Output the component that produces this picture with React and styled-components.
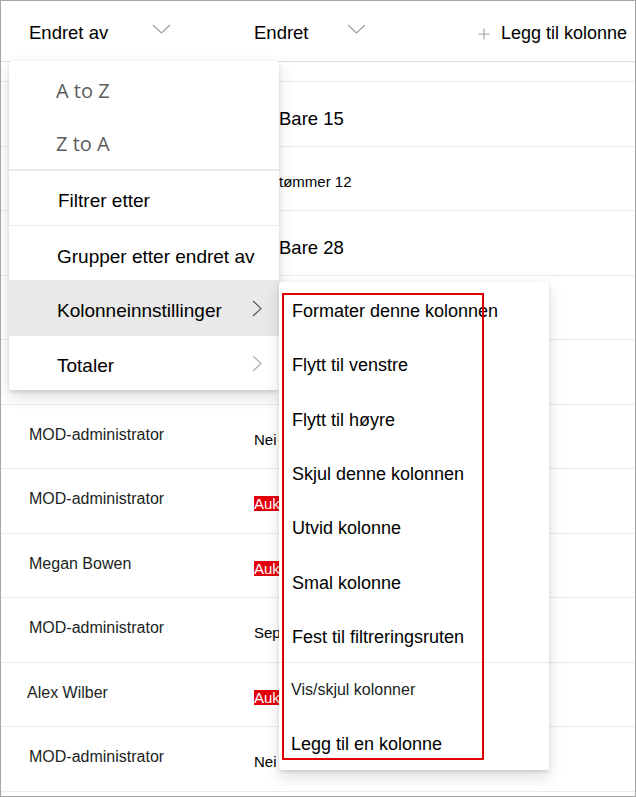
import React from 'react'
import styled, { createGlobalStyle } from 'styled-components'

const GlobalStyle = createGlobalStyle`
  html, body {
    margin: 0;
    padding: 0;
    background: #fff;
  }
  body {
    font-family: "Liberation Sans", Arial, sans-serif;
    color: #000;
  }
`

const Frame = styled.div`
  position: relative;
  width: 636px;
  height: 797px;
  box-sizing: border-box;
  border: 1px solid #a6a6a6;
  overflow: hidden;
  background: #fff;
`

const HeaderRow = styled.div`
  display: flex;
  height: 60px;
  border-bottom: 1px solid #e1dfdd;
`

const HeaderCell = styled.div`
  display: flex;
  align-items: flex-start;
  box-sizing: border-box;
  width: ${p => (p.$w ? `${p.$w}px` : 'auto')};
  flex: ${p => (p.$w ? 'none' : '1')};
  padding-left: ${p => p.$pl || 0}px;
  padding-top: 21px;
`

const HeaderLabel = styled.div`
  width: ${p => (p.$w ? `${p.$w}px` : 'auto')};
  font-size: ${p => p.$size || 18}px;
  line-height: 22px;
  color: #000;
  white-space: nowrap;
`

const ChevronDown = styled.svg`
  margin-top: 2px;
  flex: none;
`

const PlusIcon = styled.svg`
  margin-top: 6px;
  margin-right: 11px;
  flex: none;
`

const Row = styled.div`
  display: flex;
  height: ${p => p.$h || 64.5}px;
  box-sizing: border-box;
  border-bottom: 1px solid #edebe9;
`

const NameCell = styled.div`
  width: 253px;
  flex: none;
  box-sizing: border-box;
  padding-left: ${p => p.$pl ?? 28}px;
  padding-top: 20px;
  font-size: 16px;
  line-height: 20px;
  color: #201f1e;
  white-space: nowrap;
`

const ValueCell = styled.div`
  flex: 1;
  box-sizing: border-box;
  padding-left: ${p => p.$indent || 0}px;
  padding-top: ${p => p.$pt || 25}px;
  font-size: ${p => p.$size || 15}px;
  line-height: 20px;
  color: #000;
  white-space: nowrap;
  overflow: hidden;
`

const RedTag = styled.span`
  display: inline-block;
  background: #e3000b;
  color: #fff;
  line-height: 15px;
  padding: 0 1px 0 0;
`

const Menu = styled.div`
  position: absolute;
  left: ${p => p.$x}px;
  top: ${p => p.$y}px;
  width: 270px;
  background: #fff;
  border-radius: 2px;
  box-shadow: 0 6.4px 14.4px rgba(0, 0, 0, 0.13), 0 1.2px 3.6px rgba(0, 0, 0, 0.11);
  display: flex;
  flex-direction: column;
`

const MenuItem = styled.div`
  display: flex;
  align-items: center;
  justify-content: space-between;
  box-sizing: border-box;
  height: ${p => p.$h || 54}px;
  padding-left: ${p => p.$pl || 48}px;
  padding-right: 17px;
  padding-top: ${p => p.$pt ?? 5}px;
  background: ${p => (p.$active ? '#e9e9e9' : 'transparent')};
  font-size: ${p => p.$size || 19}px;
  color: ${p => p.$color || '#000'};
  font-family: ${p => (p.$light ? '"Open Sans", "Liberation Sans", sans-serif' : 'inherit')};
  white-space: nowrap;
`

const Separator = styled.div`
  height: ${p => p.$h || 1}px;
  background: #ebebeb;
  flex: none;
`

const Highlight = styled.div`
  position: absolute;
  left: 3px;
  top: 11px;
  width: 202px;
  height: 467px;
  box-sizing: border-box;
  border: 2px solid #e00000;
  pointer-events: none;
`

const Chevron = ({ color = '#605e5c' }) => (
  <svg width="10" height="17" viewBox="0 0 10 17" style={{ marginTop: -5 }}>
    <polyline points="1,1 9,8.5 1,16" fill="none" stroke={color} strokeWidth="1.2" />
  </svg>
)

const Down = () => (
  <ChevronDown width="19" height="10" viewBox="0 0 19 10">
    <polyline points="1,1 9.5,9 18,1" fill="none" stroke="#a19f9d" strokeWidth="1.2" />
  </ChevronDown>
)

const rows = [
  { name: 'Megan Bowen', value: 'Bare 15', indent: 25, size: 18.5, pt: 27 },
  { name: 'MOD-administrator', value: 'tømmer 12', indent: 25, size: 15, pt: 25 },
  { name: 'Alex Wilber', value: 'Bare 28', indent: 25, size: 18.5, pt: 27 },
  { name: 'MOD-administrator', value: '' },
  { name: 'Megan Bowen', value: '' },
  { name: 'MOD-administrator', value: 'Nei' },
  { name: 'MOD-administrator', value: 'Auk', red: true },
  { name: 'Megan Bowen', value: 'Auk', red: true },
  { name: 'MOD-administrator', value: 'Sep.' },
  { name: 'Alex Wilber', value: 'Auk', red: true, pl: 26 },
  { name: 'MOD-administrator', value: 'Nei' },
]

const subItems = [
  'Formater denne kolonnen',
  'Flytt til venstre',
  'Flytt til høyre',
  'Skjul denne kolonnen',
  'Utvid kolonne',
  'Smal kolonne',
  'Fest til filtreringsruten',
]

export default function App() {
  return (
    <>
      <GlobalStyle />
      <Frame>
        <HeaderRow>
          <HeaderCell $w={253} $pl={28}>
            <HeaderLabel $w={123} $size={18.5}>Endret av</HeaderLabel>
            <Down />
          </HeaderCell>
          <HeaderCell $w={224}>
            <HeaderLabel $w={93} $size={18.5}>Endret</HeaderLabel>
            <Down />
          </HeaderCell>
          <HeaderCell>
            <PlusIcon width="12" height="12" viewBox="0 0 12 12">
              <path d="M6 0.5V11.5M0.5 6H11.5" stroke="#a19f9d" strokeWidth="1.1" fill="none" />
            </PlusIcon>
            <HeaderLabel>Legg til kolonne</HeaderLabel>
          </HeaderCell>
        </HeaderRow>

        <Row $h={20} />
        {rows.map((r, i) => (
          <Row key={i}>
            <NameCell $pl={r.pl}>{r.name}</NameCell>
            <ValueCell $indent={r.indent} $size={r.size} $pt={r.pt}>
              {r.red ? <RedTag>{r.value}ust 2019</RedTag> : r.value}
            </ValueCell>
          </Row>
        ))}
        <Row $h={10} />

        <Menu $x={8} $y={60}>
          <MenuItem $h={56} $light $size={20} $color="#5c5c5c" $pl={47} $pt={2}>A to Z</MenuItem>
          <MenuItem $h={52} $light $size={20} $color="#5c5c5c" $pl={47} $pt={1}>Z to A</MenuItem>
          <Separator $h={2} />
          <MenuItem $pl={49}>Filtrer etter</MenuItem>
          <Separator />
          <MenuItem $pt={8}>Grupper etter endret av</MenuItem>
          <MenuItem $h={56} $active $pt={6}>
            Kolonneinnstillinger
            <Chevron />
          </MenuItem>
          <MenuItem $pt={6}>
            Totaler
            <Chevron color="#b3b0ad" />
          </MenuItem>
        </Menu>

        <Menu $x={278} $y={281}>
          {subItems.map(t => (
            <MenuItem key={t} $h={54.3} $pl={13} $size={18}>{t}</MenuItem>
          ))}
          <Separator />
          <MenuItem $h={53.5} $pt={0} $pl={12} $size={16} $color="#201f1e">Vis/skjul kolonner</MenuItem>
          <MenuItem $h={53.5} $pt={3} $pl={12} $size={18}>Legg til en kolonne</MenuItem>
          <Highlight />
        </Menu>
      </Frame>
    </>
  )
}
